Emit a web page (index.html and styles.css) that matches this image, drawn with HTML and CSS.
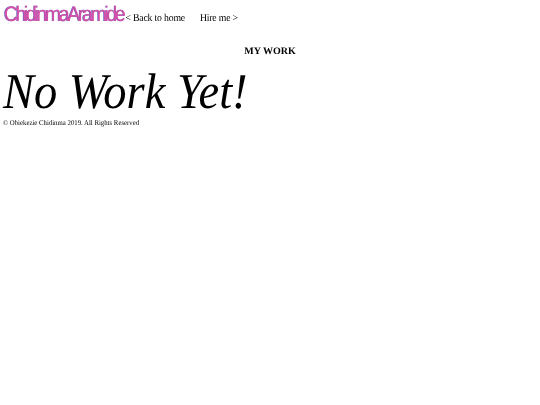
FILE: index.html
```html
<!DOCTYPE html>
<html lang="en">
<head>
    <meta charset="UTF-8">
    <title>My Work</title>
    <link rel="stylesheet" href="styles.css">
</head>
<body>
<div class="nav squeezed">
    <a class="logo" href="#">ChidinmaAramide</a>
    <a class="nav-link" href="#">&lt; Back to home</a>
    <a class="nav-link" href="#">Hire me &gt;</a>
</div>
<h4 class="title">MY WORK</h4>
<p class="empty squeezed">No Work Yet!</p>
<p class="footer squeezed">© Obiekezie Chidinma 2019. All Rights Reserved</p>
</body>
</html>
```

FILE: styles.css
```css
body {
    margin: 0;
    overflow: hidden;
    background: white;
    color: black;
    font-family: "Liberation Serif", "Times New Roman", serif;
    text-rendering: geometricPrecision;
}

a {
    color: inherit;
    text-decoration: none;
}

/* the shot is squeezed sideways, so the text is too */
.squeezed {
    padding-left: 3.2px;
    transform: scaleX(.93);
    transform-origin: 0 0;
    filter: blur(.3px);
}

.nav {
    display: flex;
    align-items: baseline;
    padding-top: 3px;
    height: 27px;
}

.logo {
    font-family: "Liberation Sans", Arial, sans-serif;
    font-size: 21px;
    letter-spacing: -2.55px;
    color: #d64fa6;
    text-shadow: -.7px 0 #6a63c4;
    margin-left: 1px;
    margin-right: 2px;
}

.nav-link {
    font-size: 10.5px;
    letter-spacing: -.2px;
    margin-right: 16px;
}

.title {
    margin: 16px 0 0;
    font-size: 10px;
    text-align: center;
    filter: blur(.3px);
}

.empty {
    margin: 7px 0 0;
    font-size: 50px;
    line-height: 54px;
    font-style: italic;
}

.footer {
    margin: 0;
    font-size: 7.3px;
}
```
